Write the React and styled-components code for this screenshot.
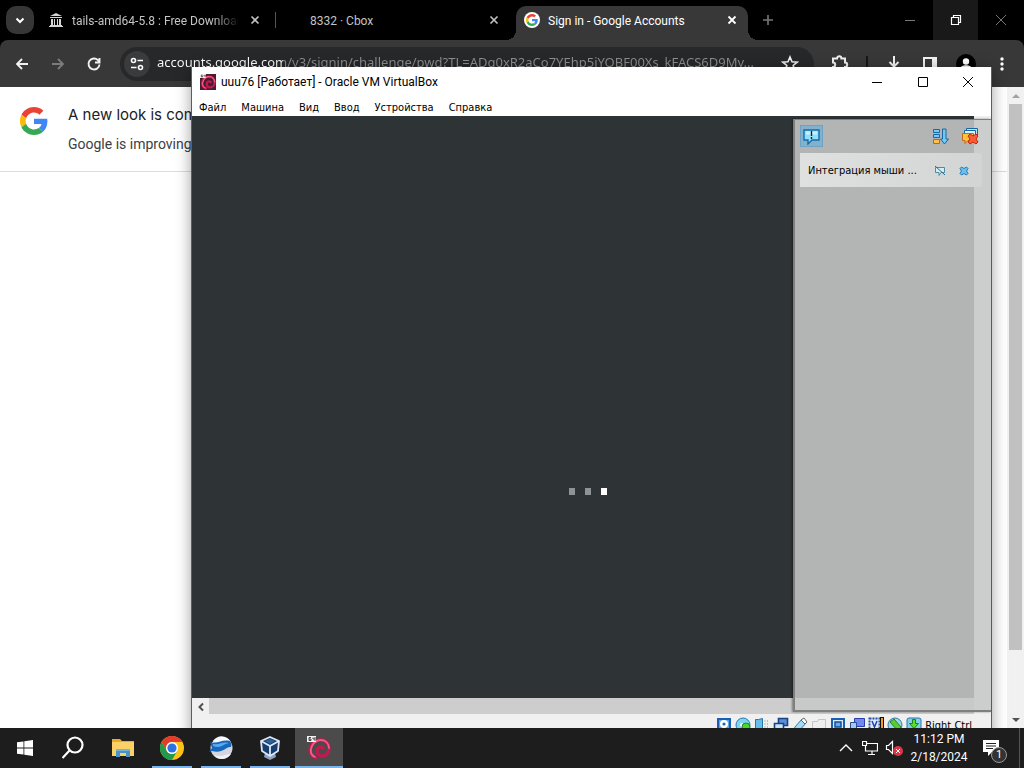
import React from "react";
import styled, { createGlobalStyle, css } from "styled-components";

const ui = `Roboto, "Noto Sans", sans-serif`;
const dialogFont = `"DejaVu Sans Condensed", "DejaVu Sans", sans-serif`;

const GlobalStyle = createGlobalStyle`
  *, *::before, *::after { box-sizing: border-box; }
  body { margin: 0; font-family: ${ui}; font-size: 12px; overflow: hidden; }
  button { border: 0; padding: 0; margin: 0; background: none; color: inherit; font: inherit; }
  svg { display: block; flex: none; }
  h1, p { margin: 0; }
`;

const Desktop = styled.div`
  position: relative;
  display: flex;
  flex-direction: column;
  height: 100vh;
  overflow: hidden;
  background: #fff;
`;

/* ---------- browser ---------- */
const Browser = styled.section`
  flex: 1;
  min-height: 0;
  display: flex;
  flex-direction: column;
  background: #000;
`;

const TabStrip = styled.header`
  display: flex;
  align-items: center;
  height: 40px;
  padding-left: 6px;
  color: #c4c4c4;
`;

const TabSearch = styled.button`
  display: grid;
  place-items: center;
  flex: none;
  width: 28px;
  height: 28px;
  margin-right: 4px;
  border-radius: 10px;
  background: #363636;
  color: #fff;
`;

const Tab = styled.div`
  position: relative;
  flex: 0 1 238px;
  min-width: 0;
  height: 40px;
  display: flex;
  align-items: center;
  gap: 8px;
  padding: 0 12px 0 10px;
  ${(p) =>
    p.$divided &&
    css`
      border-right: 1px solid transparent;
      border-image: linear-gradient(transparent 12px, #555 12px, #555 28px, transparent 28px) 1;
    `}
  ${(p) =>
    p.$active &&
    css`
      color: #fff;
      z-index: 0;
      &::before {
        content: "";
        position: absolute;
        z-index: -1;
        inset: 6px 4px 0 2px;
        border-radius: 10px 10px 0 0;
        background: #383838;
      }
      &::after {
        content: "";
        position: absolute;
        z-index: -1;
        inset: 30px -6px 0 -8px;
        background:
          radial-gradient(circle at 0 0, transparent 10px, #383838 10px) left / 10px 10px no-repeat,
          radial-gradient(circle at 100% 0, transparent 10px, #383838 10px) right / 10px 10px no-repeat;
      }
    `}
`;

const TabIcon = styled.span`
  flex: none;
  width: 16px;
  height: 16px;
`;

const TabTitle = styled.span`
  flex: 1;
  min-width: 0;
  overflow: hidden;
  white-space: nowrap;
  font-size: 12px;
  line-height: 18px;
  padding-top: 2px;
  ${(p) => p.$fade && css`mask-image: linear-gradient(90deg, #000 85%, transparent);`}
`;

const TabClose = styled.button`
  display: grid;
  place-items: center;
  width: 16px;
  height: 16px;
`;

const NewTab = styled.button`
  display: grid;
  place-items: center;
  width: 32px;
  height: 32px;
  color: #777;
`;

const Caption = styled.div`
  display: flex;
  align-self: stretch;
  margin-left: auto;
`;

const CaptionButton = styled.button`
  display: grid;
  place-items: center;
  width: ${(p) => p.$width || 46}px;
  color: ${(p) => (p.$hot ? "#fff" : p.$ink || "#777")};
  background: ${(p) => (p.$hot ? "#191919" : "none")};
`;

const Toolbar = styled.nav`
  display: flex;
  align-items: center;
  height: 47px;
  padding: 0 4px;
  border-radius: 8px 8px 0 0;
  background: #383838;
  color: #fff;
`;

const ToolButton = styled.button`
  display: grid;
  place-items: center;
  flex: none;
  width: 36px;
  height: 36px;
  color: ${(p) => (p.$dim ? "#7c7c7c" : "#f2f2f2")};
`;

const Omnibox = styled.label`
  flex: 1;
  min-width: 0;
  height: 34px;
  margin: 0 8px;
  padding: 0 6px 0 4px;
  display: flex;
  align-items: center;
  gap: 7px;
  border-radius: 17px;
  background: #26282a;
`;

const SiteInfo = styled.span`
  display: grid;
  place-items: center;
  flex: none;
  width: 26px;
  height: 26px;
  border-radius: 50%;
  background: #3a3b3d;
`;

const Address = styled.input`
  flex: 1;
  min-width: 0;
  height: 28px;
  padding: 0 0 3px;
  border: 0;
  outline: 0;
  font: 13px/25px "Noto Sans", sans-serif;
  color: transparent;
  text-overflow: ellipsis;
  background: linear-gradient(90deg, #fff 126px, #8d8f91 126px);
  background-clip: text;
`;

const ToolDivider = styled.span`
  width: 2px;
  height: 16px;
  margin: 0 8px;
  background: #161616;
`;

const Page = styled.main`
  flex: 1;
  min-height: 0;
  display: flex;
  background: #fff;
`;

const PageBody = styled.div`
  flex: 1;
  min-width: 0;
`;

const Banner = styled.div`
  display: flex;
  gap: 20px;
  height: 85px;
  padding: 20px;
  border-bottom: 1px solid #dadce0;
`;

const BannerText = styled.div`
  white-space: nowrap;
  color: #3c4043;
  font: 14px/20px Roboto, sans-serif;
  h1 {
    margin: -4px 0 7px;
    color: #202124;
    font: 400 15px/24px Inter, sans-serif;
  }
`;

const PageScroll = styled.div`
  display: flex;
  flex-direction: column;
  align-items: center;
  width: 17px;
  background: #f1f1f1;
`;

const ScrollArrow = styled.button`
  display: grid;
  place-items: center;
  width: 17px;
  height: 17px;
  color: ${(p) => p.$ink || "#505050"};
`;

const PageTrack = styled.div`
  flex: 1;
  width: 13px;
`;

const PageThumb = styled.div`
  height: 90%;
  background: #c1c1c1;
`;

/* ---------- virtual machine window ---------- */
const VmWindow = styled.section`
  position: absolute;
  inset: 67px 32px 29px 191px;
  display: flex;
  flex-direction: column;
  border: solid #5d5d5d;
  border-width: 0 1px 1px;
  background: #fff;
  color: #000;
  box-shadow: 0 3px 14px rgba(0, 0, 0, 0.38);
`;

const VmTitleBar = styled.header`
  display: flex;
  align-items: center;
  height: 30px;
  padding-left: 8px;
  gap: 5px;
  font-size: 12px;
  white-space: nowrap;
`;

const VmMenu = styled.nav`
  display: flex;
  align-items: center;
  height: 19px;
  padding: 2px 0 0 7px;
  gap: 15px;
  font: 11px/16px ${dialogFont};
`;

const VmView = styled.div`
  position: relative;
  flex: 1;
  min-height: 0;
  display: grid;
  grid-template: 1fr 16px / 1fr 17px;
  background: #ececec;
`;

const Guest = styled.div`
  display: flex;
  justify-content: center;
  align-items: flex-start;
  gap: 10px;
  padding: 372px 0 0 10px;
  background: #2e3436;
`;

const Dot = styled.span`
  width: 6px;
  height: 7px;
  background: ${(p) => (p.$lit ? "#fff" : "#8f9394")};
`;

const VmVScroll = styled.div`
  background: #f0f0f0;
`;

const VmHScroll = styled.div`
  grid-column: 1 / -1;
  display: flex;
  background: #f0f0f0;
`;

const VmThumb = styled.div`
  flex: 1;
  margin-right: 17px;
  background: #cdcdcd;
`;

const Notices = styled.aside`
  position: absolute;
  inset: 3px 0 2px auto;
  width: 198px;
  padding: 5px 9px 0 5px;
  border: solid #7e8080;
  border-width: 1px 0 2px 2px;
  background: rgba(199, 201, 200, 0.87);
  box-shadow: -1px 0 2px rgba(0, 0, 0, 0.4);
`;

const NoticeTools = styled.div`
  display: flex;
  align-items: center;
  gap: 6px;
  height: 22px;
  margin-bottom: 6px;
`;

const NoticeToggle = styled.button`
  display: grid;
  place-items: center;
  width: 23px;
  height: 22px;
  margin-right: auto;
  border: 1px solid #6fa3c6;
  background: #83b0cc;
`;

const NoticeButton = styled.button`
  display: grid;
  place-items: center;
  width: 24px;
  height: 20px;
`;

const Notice = styled.div`
  display: flex;
  align-items: center;
  height: 34px;
  padding: 2px 6px 0 8px;
  border-radius: 0 3px 3px 0;
  background: linear-gradient(90deg, #dfe0e0, #d3d4d4);
  font: 11px/16px ${dialogFont};
  white-space: nowrap;
  span { flex: 1; }
`;

const VmStatus = styled.footer`
  display: flex;
  justify-content: flex-end;
  gap: 3px;
  height: 24px;
  padding: 3px 19px 0 0;
  background: #f0f0f0;
  font: 11px/18px ${dialogFont};
  white-space: nowrap;
`;

/* ---------- taskbar ---------- */
const Taskbar = styled.footer`
  position: relative;
  z-index: 2;
  display: flex;
  flex: none;
  gap: 1px;
  height: 40px;
  background: #1d1d1d;
  color: #fff;
`;

const TaskButton = styled.button`
  display: grid;
  place-items: center;
  width: ${(p) => (p.$wide ? 49 : 48)}px;
  background: ${(p) => (p.$active ? "#4b4b4b" : "none")};
  ${(p) =>
    p.$running &&
    css`
      background-image: linear-gradient(#79b4ec, #79b4ec);
      background-repeat: no-repeat;
      background-position: bottom;
      background-size: ${p.$active ? "100%" : "40px"} 2px;
    `}
`;

const Tray = styled.div`
  display: flex;
  align-items: center;
  margin-left: auto;
`;

const TrayButton = styled.button`
  display: grid;
  place-items: center;
  width: 24px;
  height: 40px;
`;

const Clock = styled.button`
  width: 66px;
  height: 40px;
  font: 12px/18px ${ui};
  text-align: center;
  white-space: nowrap;
  time { display: block; }
`;

const ActionCenter = styled.button`
  position: relative;
  display: grid;
  place-items: center;
  width: 47px;
  height: 40px;
  padding-right: 9px;
`;

const Badge = styled.span`
  position: absolute;
  right: 12px;
  bottom: 5px;
  width: 16px;
  height: 16px;
  border: 1px solid #999;
  border-radius: 50%;
  background: #333;
  font-size: 11px;
  line-height: 14px;
`;

const ShowDesktop = styled.button`
  width: 5px;
  height: 40px;
  border-left: 1px solid #555;
`;

/* ---------- drawings ---------- */
const Line = ({ d, s = 16, w = 1, vb = 16, ...r }) => (
  <svg width={s} height={s} viewBox={`0 0 ${vb} ${vb}`} fill="none" stroke="currentColor" strokeWidth={w} {...r}>
    <path d={d} />
  </svg>
);

const GoogleG = ({ size }) => (
  <svg width={size} height={size} viewBox="0 0 48 48">
    <path fill="#EA4335" d="M24 9.5c3.54 0 6.71 1.22 9.21 3.6l6.85-6.85C35.9 2.38 30.47 0 24 0 14.62 0 6.51 5.38 2.56 13.22l7.98 6.19C12.43 13.72 17.74 9.5 24 9.5z" />
    <path fill="#4285F4" d="M46.98 24.55c0-1.57-.15-3.09-.38-4.55H24v9.02h12.94c-.58 2.96-2.26 5.48-4.78 7.18l7.73 6c4.51-4.18 7.09-10.36 7.09-17.65z" />
    <path fill="#FBBC05" d="M10.53 28.59c-.48-1.45-.76-2.99-.76-4.59s.27-3.14.76-4.59l-7.98-6.19C.92 16.46 0 20.12 0 24s.92 7.54 2.56 10.78l7.97-6.19z" />
    <path fill="#34A853" d="M24 48c6.48 0 11.93-2.13 15.89-5.81l-7.73-6c-2.15 1.45-4.92 2.3-8.16 2.3-6.26 0-11.57-4.22-13.47-9.91l-7.98 6.19C6.51 42.62 14.62 48 24 48z" />
  </svg>
);

const GoogleFavicon = () => (
  <svg width="16" height="16" viewBox="0 0 16 16">
    <circle cx="8" cy="8" r="8" fill="#fff" />
    <svg x="2" y="2" width="12" height="12"><GoogleG size={12} /></svg>
  </svg>
);

const ArchiveIcon = () => (
  <svg width="16" height="16" viewBox="0 0 16 16" fill="#d5d5d5">
    <path d="M8 1 14 4H2zM2 5h12v1H2zM3 7h2v6H3zM6 7h1v6H6zM9 7h1v6H9zM11 7h2v6h-2zM2 13h12v1H2zM1 14h14v1H1z" />
  </svg>
);

const DebianIcon = ({ size }) => (
  <svg width={size} height={size} viewBox="0 0 24 24">
    {size < 20 && <path d="M0 0h24v24H0z" fill="#4a1c30" />}
    <g fill="none" strokeLinecap="round">
      <path d="M9 22C3 20 2 14 4 10c2-4 6-6 10-6 5 0 8 4 8 9 0 4-3 7-7 7-3 0-5-2-5-5s3-5 6-3" stroke="#c01a4e" strokeWidth="3.400" />
      <path d="M8 21C3 19 3 14 5 10c2-4 5-6 9-6 5 0 8 4 8 8" stroke="#f75a85" strokeWidth="1.800" />
    </g>
    <path d="M0 0h9v6H0z" fill="#f3f3f3" />
    <path d="M4 1.5H2v3h2V3H2M6 1.5V3h2M8 1v4" fill="none" stroke="#333" strokeWidth=".9" />
  </svg>
);

const Star = () => <Line s={18} vb={18} w={1.6} d="m9 2 2 4.8 5.2.4-4 3.3 1.3 5L9 12.700l-4.500 2.800 1.300-5-4-3.300L7 6.800z" />;

const BubbleIcon = () => (
  <svg width="17" height="17" viewBox="0 0 17 17">
    <path d="M1 2h15v10H9l-4 4v-4H1z" fill="#8fe0ff" stroke="#176ba5" strokeWidth="1.4" />
    <path d="M3 3.500h11v3H3z" fill="#c4f2ff" />
    <path d="M8.500 3v5M8.500 9v2" stroke="#222" strokeWidth="1.4" />
  </svg>
);

const SortIcon = () => (
  <svg width="17" height="17" viewBox="0 0 17 17" strokeWidth="1">
    <path d="M1.500 1.500h6v3h-6zM1.500 6.500h6v3h-6z" fill="#79ccf6" stroke="#1767a8" />
    <path d="M1.500 11.500h6v4h-6z" fill="#ffc04d" stroke="#c85f17" />
    <path d="M10.500 1h3.500v10h2.500l-4 5-4-5h2z" fill="#6ccaf5" stroke="#1767a8" />
  </svg>
);

const ClearIcon = () => (
  <svg width="18" height="18" viewBox="0 0 18 18">
    <path d="M5.500 1.500h11v7h-11z" fill="#b5e5fb" stroke="#1767a8" />
    <path d="M3.500 3.500h11v7h-11z" fill="#d8f3ff" stroke="#1767a8" />
    <path d="M1.500 6.500h11v7H7l-3 3v-3H1.500z" fill="#ffc23d" stroke="#c66813" />
    <path d="m7 9 2-2 3 2 3-2 2 2-2 3 2 3-2 2-3-2-3 2-2-2 2-3z" fill="#ff5c35" stroke="#b82810" />
  </svg>
);

const MuteNoticeIcon = () => (
  <svg width="12" height="12" viewBox="0 0 12 12">
    <path d="M1.500 2.500h9v5H7l-2 3v-3H1.500z" fill="#d2eef4" stroke="#4d8ca6" />
    <path d="m1 1 10 9" stroke="#2e6d82" />
  </svg>
);

const CrossIcon = () => (
  <svg width="10" height="10" viewBox="0 0 10 10">
    <path d="m1 2.500 1.500-1.500L5 2.500 7.500 1 9 2.500 7.500 5 9 7.500 7.500 9 5 7.500 2.500 9 1 7.500 2.500 5z" fill="#69c1ef" stroke="#2576b3" />
  </svg>
);

const statusDrawings = [
  <g key="hd"><rect x="2" y="2" width="12" height="13" fill="#5aa8ea" stroke="#1b5fb4" strokeWidth="2" /><circle cx="8" cy="7" r="4" fill="#fff" /><circle cx="8" cy="7" r="1.600" fill="#2d62b1" /></g>,
  <g key="cd"><circle cx="8" cy="8" r="7" fill="#7fd4f4" stroke="#2379b5" /><circle cx="7" cy="8" r="2" fill="#fff" /><circle cx="11" cy="10" r="4" fill="#4fd42d" stroke="#1f8a1d" /></g>,
  <g key="audio"><path d="M1.500 2.500h3l4-1v14l-7-3z" fill="#67bce8" stroke="#2875ac" /><path d="M11 3v11M13.500 3v11" stroke="#bbb" strokeDasharray="2 1" /></g>,
  <g key="net" stroke="#17427f"><path d="M5.500 1.500h9v7h-9z" fill="#5e8dde" strokeWidth="1.600" /><path d="M1.500 6.500h9v6h-9z" fill="#c4e3fc" strokeWidth="1.600" /></g>,
  <g key="usb"><path d="m3 10 7-8 4 4-7 8c-3 2-6-1-4-4z" fill="#a4dcf6" stroke="#3279a8" /><path d="m9 3 3-2 3 4-2 2z" fill="#fff" stroke="#666" /></g>,
  <path key="dir" d="M1.500 4.500h5l1-2h7v12h-13z" fill="#eee" stroke="#c4c4c4" />,
  <g key="display"><path d="M2 2h12v11H2z" fill="#d6ecfc" stroke="#1b5fb4" strokeWidth="2" /><path d="M5 5h6v5H5z" fill="#62afed" stroke="#174b91" strokeWidth="1.500" /></g>,
  <g key="rec"><path d="M5.500 1.500h10v8h-10z" fill="#7188ee" stroke="#2b3cae" /><path d="M1.500 5.500h6v8h-6z" fill="#a4c7f6" stroke="#24508e" /></g>,
  <g key="cpu"><path d="M1.500 1.500h10v13h-10z" fill="#dceaff" stroke="#254f9d" strokeWidth="2" strokeDasharray="2 1" /><path d="m4 4 2.500 6L9 4" fill="none" stroke="#2443a5" strokeWidth="1.500" /><path d="M12 0h4v16h-4z" fill="#111" /><path d="M13 1h2v14h-2z" fill="#f69a25" /></g>,
  <g key="mouse"><circle cx="8" cy="8" r="7" fill="#98d9ed" stroke="#33789d" /><path d="m7 2 7 8-3 4-8-9z" fill="#5ccb32" stroke="#23851b" /></g>,
  <g key="key"><rect x="1" y="1" width="14" height="14" rx="2" fill="#83cdea" stroke="#2878a3" /><path d="M6.500 2.500h3v4h3L8 11.500 3.500 6.500h3z" fill="#58df29" stroke="#1c8219" /></g>,
];

const WindowsIcon = () => (
  <svg width="16" height="16" viewBox="0 0 16 16" fill="#fff"><path d="m0 2.300 6.500-.9v6.200H0zM7.300 1.300 16 0v7.600H7.300zM0 8.400h6.500v6.200L0 13.700zM7.300 8.400H16V16l-8.700-1.300z" /></svg>
);

const FolderIcon = () => (
  <svg width="22" height="20" viewBox="0 0 22 20">
    <path d="M0 1h8l2 2h12v15H0z" fill="#e8a92c" /><path d="M0 4h22v14H0z" fill="#fad067" />
    <path d="M4 19v-8h14v8h-4v-4H8v4z" fill="#4a93c4" /><path d="M4 11h14v2H4z" fill="#72b5db" />
  </svg>
);

const ChromeIcon = () => (
  <svg width="24" height="24" viewBox="0 0 24 24">
    <circle cx="12" cy="12" r="12" fill="#fbc116" />
    <path d="M1.600 6A12 12 0 0 1 22.400 6H12a6 6 0 0 0-5.200 9z" fill="#e33b2e" />
    <path d="M1.600 6A12 12 0 0 0 12 24l5.200-9a6 6 0 0 1-10.400 0z" fill="#229a4b" />
    <circle cx="12" cy="12" r="6" fill="#fff" /><circle cx="12" cy="12" r="4.600" fill="#2a72e5" />
  </svg>
);

const GlobeIcon = () => (
  <svg width="24" height="24" viewBox="0 0 24 24">
    <circle cx="12.500" cy="12" r="11" fill="#d3d6de" />
    <path d="M4 5C9-2 18-1 22 6c-6-3-11 3-18-1z" fill="#f6f8fb" />
    <path d="M1 6c5 3 12-3 20-1 1 2 2 4 1 6-5-1-8 7-19 4L0 16l3-4z" fill="#1767bd" />
    <path d="M4 8c7 1 10-3 16-1-6 1-8 6-16 3z" fill="#56abee" />
    <path d="M5 19c6 3 12-1 17-1-4 6-13 7-17 1z" fill="#eff1f5" />
  </svg>
);

const BoxIcon = () => (
  <svg width="22" height="24" viewBox="0 0 22 24" strokeLinejoin="round">
    <path d="M6 17h10l1 4-6 3-6-3z" fill="#8ba4c2" />
    <path d="m11 1 9 4-1 10-8 5-8-5L2 5z" fill="#173c70" stroke="#dce8f4" strokeWidth="1.800" />
    <path d="m2 5 9 5 9-5M11 10v10" fill="none" stroke="#dce8f4" strokeWidth="1.800" />
    <path d="m11 3 5 2-5 3-5-3z" fill="#2f6199" />
  </svg>
);

const X = "m4.500 4.500 7 7m0-7-7 7";

function BrowserWindow() {
  return (
    <Browser>
      <TabStrip>
        <TabSearch aria-label="Search tabs"><Line w={2} d="m4.500 6.500 3.500 3.500 3.500-3.500" /></TabSearch>
        <Tab $divided>
          <TabIcon><ArchiveIcon /></TabIcon>
          <TabTitle $fade>tails-amd64-5.8 : Free Download</TabTitle>
          <TabClose aria-label="Close tab"><Line w={1.6} d={X} /></TabClose>
        </Tab>
        <Tab>
          <TabIcon />
          <TabTitle>8332 · Cbox</TabTitle>
          <TabClose aria-label="Close tab"><Line w={1.6} d={X} /></TabClose>
        </Tab>
        <Tab $active>
          <TabIcon><GoogleFavicon /></TabIcon>
          <TabTitle>Sign in - Google Accounts</TabTitle>
          <TabClose aria-label="Close tab"><Line w={1.8} d={X} /></TabClose>
        </Tab>
        <NewTab aria-label="New tab"><Line w={1.6} d="M8 3v10M3 8h10" /></NewTab>
        <Caption>
          <CaptionButton aria-label="Minimize"><Line d="M3 8.500h10" /></CaptionButton>
          <CaptionButton $hot $width={45} aria-label="Restore"><Line w={1.2} d="M3.500 5.500h7v7h-7zM5.500 5.500v-2h7v7h-2" /></CaptionButton>
          <CaptionButton aria-label="Close"><Line d="m3 3 10 10m0-10L3 13" /></CaptionButton>
        </Caption>
      </TabStrip>
      <Toolbar>
        <ToolButton aria-label="Back"><Line w={1.8} d="M14 8H3m5-5L3 8l5 5" /></ToolButton>
        <ToolButton $dim aria-label="Forward"><Line w={1.8} d="M2 8h11M8 3l5 5-5 5" /></ToolButton>
        <ToolButton aria-label="Reload"><Line w={1.9} d="M13.500 8.500a5.500 5.500 0 1 1-1.600-4.400L13.500 6M13.500 2v4.500H9" /></ToolButton>
        <Omnibox>
          <SiteInfo><Line w={1.6} d="M8.500 4.500H14M2 11.500h5.500M6.500 4.500a2 2 0 1 1-4 0 2 2 0 0 1 4 0M13.500 11.500a2 2 0 1 1-4 0 2 2 0 0 1 4 0" /></SiteInfo>
          <Address
            aria-label="Address"
            readOnly
            value="accounts.google.com/v3/signin/challenge/pwd?TL=ADg0xR2aCo7YEhp5iYOBF00Xs_kFACS6D9My..."
          />
          <ToolButton as="span"><Star /></ToolButton>
        </Omnibox>
        <ToolButton aria-label="Extensions"><Line s={18} vb={18} w={2} d="M2 3.500h4a2.200 2.200 0 0 1 4.400 0H14v4a2.200 2.200 0 0 1 0 4.400V16H2v-4a2.200 2.200 0 0 0 0-4.400z" /></ToolButton>
        <ToolDivider />
        <ToolButton aria-label="Downloads"><Line w={2} d="M8 0v10M3.500 6 8 10.500 12.500 6M2 11v3h12v-3" /></ToolButton>
        <ToolButton aria-label="Side panel"><Line w={2} d="M2 2h12v12H2zM11 2v12M12.500 2v12" /></ToolButton>
        <ToolButton aria-label="Profile">
          <svg width="20" height="20" viewBox="0 0 20 20"><circle cx="10" cy="10" r="10" fill="#000" /><circle cx="10" cy="7.500" r="3.200" fill="#fff" /><path d="M3.500 15c1-5 12-5 13 0-3 4-10 4-13 0z" fill="#fff" /></svg>
        </ToolButton>
        <ToolButton aria-label="Menu">
          <svg width="16" height="16" viewBox="0 0 16 16" fill="#fff"><circle cx="8" cy="3" r="1.700" /><circle cx="8" cy="8" r="1.700" /><circle cx="8" cy="13" r="1.700" /></svg>
        </ToolButton>
      </Toolbar>
      <Page>
        <PageBody>
          <Banner>
            <GoogleG size={28} />
            <BannerText>
              <h1>A new look is coming soon</h1>
              <p>Google is improving its sign-in page</p>
            </BannerText>
          </Banner>
        </PageBody>
        <PageScroll>
          <ScrollArrow $ink="#a3a3a3" aria-label="Scroll up"><Line s={8} vb={8} fill="currentColor" stroke="none" d="M0 6l4-4 4 4z" /></ScrollArrow>
          <PageTrack><PageThumb /></PageTrack>
          <ScrollArrow aria-label="Scroll down"><Line s={8} vb={8} fill="currentColor" stroke="none" d="M0 2l4 4 4-4z" /></ScrollArrow>
        </PageScroll>
      </Page>
    </Browser>
  );
}

function VirtualMachine() {
  return (
    <VmWindow>
      <VmTitleBar>
        <DebianIcon size={16} />
        <span>uuu76 [Работает] - Oracle VM VirtualBox</span>
        <Caption>
          <CaptionButton $ink="#000" aria-label="Minimize"><Line d="M3 8.500h10" /></CaptionButton>
          <CaptionButton $ink="#000" $width={45} aria-label="Maximize"><Line d="M3.500 3.500h9v9h-9z" /></CaptionButton>
          <CaptionButton $ink="#000" aria-label="Close"><Line d="m3 3 10 10m0-10L3 13" /></CaptionButton>
        </Caption>
      </VmTitleBar>
      <VmMenu>
        {["Файл", "Машина", "Вид", "Ввод", "Устройства", "Справка"].map((m) => (
          <button key={m}>{m}</button>
        ))}
      </VmMenu>
      <VmView>
        <Guest><Dot /><Dot /><Dot $lit /></Guest>
        <VmVScroll />
        <VmHScroll>
          <ScrollArrow aria-label="Scroll left"><Line s={10} vb={10} w={2} d="M7 1.500 3.500 5 7 8.500" /></ScrollArrow>
          <VmThumb />
        </VmHScroll>
        <Notices>
          <NoticeTools>
            <NoticeToggle aria-label="Notifications"><BubbleIcon /></NoticeToggle>
            <NoticeButton aria-label="Sort"><SortIcon /></NoticeButton>
            <NoticeButton aria-label="Remove all"><ClearIcon /></NoticeButton>
          </NoticeTools>
          <Notice>
            <span>Интеграция мыши ...</span>
            <NoticeButton aria-label="Suppress"><MuteNoticeIcon /></NoticeButton>
            <NoticeButton aria-label="Dismiss"><CrossIcon /></NoticeButton>
          </Notice>
        </Notices>
      </VmView>
      <VmStatus>
        {statusDrawings.map((drawing) => (
          <svg key={drawing.key} width="16" height="16" viewBox="0 0 16 16">{drawing}</svg>
        ))}
        <span>Right Ctrl</span>
      </VmStatus>
    </VmWindow>
  );
}

export default function App() {
  return (
    <Desktop>
      <GlobalStyle />
      <BrowserWindow />
      <VirtualMachine />
      <Taskbar>
        <TaskButton $wide aria-label="Start"><WindowsIcon /></TaskButton>
        <TaskButton aria-label="Search"><Line s={24} vb={24} w={2.2} d="M20.500 9a7.500 7.500 0 1 1-15 0 7.500 7.500 0 0 1 15 0zM7.500 14.500.5 22" /></TaskButton>
        <TaskButton aria-label="File Explorer"><FolderIcon /></TaskButton>
        <TaskButton $running aria-label="Chrome"><ChromeIcon /></TaskButton>
        <TaskButton $running aria-label="Browser"><GlobeIcon /></TaskButton>
        <TaskButton $running aria-label="VirtualBox"><BoxIcon /></TaskButton>
        <TaskButton $running $active aria-label="uuu76"><DebianIcon size={24} /></TaskButton>
        <Tray>
          <TrayButton aria-label="Show hidden icons"><Line w={1.4} d="m2 11 6-6 6 6" /></TrayButton>
          <TrayButton aria-label="Network"><Line w={1.2} d="M5 3.500h10.500v7.500H3.500V6M.500 1.500h4v4h-4zM10 11v3M6 14.500h7" /></TrayButton>
          <TrayButton aria-label="Volume">
            <svg width="18" height="16" viewBox="0 0 18 16"><path d="M1.500 5.500h2l4-4v12l-4-4h-2z" fill="none" stroke="#fff" strokeWidth="1.200" /><circle cx="13" cy="11" r="5" fill="#d93847" /><path d="m11 9 4 4m0-4-4 4" stroke="#fff" /></svg>
          </TrayButton>
          <Clock><time>11:12 PM</time><time>2/18/2024</time></Clock>
          <ActionCenter aria-label="Notifications">
            <svg width="16" height="16" viewBox="0 0 16 16"><path d="M0 0h16v12H9l-4 4v-4H0z" fill="#fff" /><path d="M3 3.500h10M3 6h10M3 8.500h7" stroke="#222" /></svg>
            <Badge>1</Badge>
          </ActionCenter>
          <ShowDesktop aria-label="Show desktop" />
        </Tray>
      </Taskbar>
    </Desktop>
  );
}
